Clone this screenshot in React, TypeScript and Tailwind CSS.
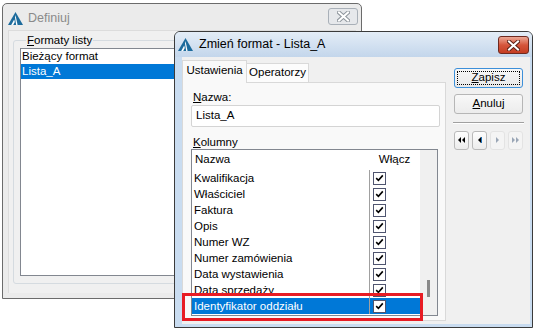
import React from "react";

const rows = [
  "Kwalifikacja",
  "Właściciel",
  "Faktura",
  "Opis",
  "Numer WZ",
  "Numer zamówienia",
  "Data wystawienia",
  "Data sprzedaży",
  "Identyfikator oddziału",
];

const Logo = () => (
  <svg width="15" height="13" viewBox="0 0 15 13">
    <polygon points="7.5,0 15,13 0,13" fill="#1d6b9c" />
    <polygon points="7.5,3 9.6,13 8.2,13 7,5.5" fill="#ffffff" />
    <polygon points="3.2,13 6.2,7.5 6.8,10 5.2,13" fill="#ffffff" />
  </svg>
);

const CloseGlyph = ({ color, outline }: { color: string; outline: string }) => (
  <svg width="13" height="11" viewBox="0 0 13 11">
    <path d="M2 1.5 L11 9.5 M11 1.5 L2 9.5" stroke={outline} strokeWidth="4" strokeLinecap="square" />
    <path d="M2 1.5 L11 9.5 M11 1.5 L2 9.5" stroke={color} strokeWidth="2" strokeLinecap="square" />
  </svg>
);

const Check = () => (
  <span className="flex h-[13px] w-[13px] items-center justify-center border border-[#4f5570] bg-white">
    <svg width="9" height="8" viewBox="0 0 9 8">
      <path d="M1.2 4.2 L3.4 6.3 L7.8 1.4" stroke="#000" strokeWidth="1.6" fill="none" />
    </svg>
  </span>
);

const NavIcon = ({ dir, double, off }: { dir: "l" | "r"; double?: boolean; off?: boolean }) => {
  const fill = off ? "#9aa6b6" : "#000";
  const one = (x: number) =>
    dir === "l" ? `${x + 3},0 ${x + 3},6 ${x},3` : `${x},0 ${x},6 ${x + 3},3`;
  return (
    <svg width={double ? 8 : 5} height="7" viewBox={double ? "0 0 8 7" : "0 0 5 7"}>
      {double ? (
        <>
          <polygon points={one(0)} fill={fill} />
          <polygon points={one(4)} fill={fill} />
        </>
      ) : (
        <>
          <polygon points={one(1)} fill={fill} />
          {!off && <rect x={dir === "l" ? 4 : 0} y="0" width="1" height="6" fill="#1c6fb8" />}
        </>
      )}
    </svg>
  );
};

const NavButton = ({ children, off }: { children: React.ReactNode; off?: boolean }) => (
  <div
    className={`flex h-[19px] w-[15px] items-center justify-center rounded-[3px] border ${
      off ? "border-[#e3e3e3] bg-[#f4f4f4]" : "border-[#b9b9b9] bg-gradient-to-b from-[#fdfdfd] to-[#ececec]"
    }`}
  >
    {children}
  </div>
);

export default function App() {
  return (
    <div className="relative h-[329px] w-[534px] overflow-hidden bg-white font-['Segoe_UI','Liberation_Sans',sans-serif] text-[11.5px] text-black">
      {/* Definiuj – inactive window */}
      <div className="absolute left-[2px] top-[3px] flex h-[296px] w-[360px] flex-col rounded-t-[5px] border border-[#6b6b6b] bg-[#ebebeb]">
        <div className="relative flex h-[26px] items-center gap-[5px] pl-[5px] pt-[2px]">
          <Logo />
          <span className="text-[12.5px] text-[#8a8a8a]">Definiuj</span>
          <div className="absolute right-[3px] top-[4px] flex h-[17px] w-[30px] items-center justify-center rounded-[3px] border border-[#a9b0b8] bg-[#e6e8eb]">
            <CloseGlyph color="#ffffff" outline="#8e959c" />
          </div>
        </div>
        <div className="mx-[5px] mb-[5px] flex-1 border-t border-l border-[#dcdcdc] bg-[#f0f0f0] pl-[4px] pt-[2px]">
          <fieldset className="h-[251px] w-[344px] rounded-[3px] border border-[#d5dbe0] pl-[6px] pr-[6px]">
            <legend className="ml-[6px] px-[1px] leading-[14px]">
              <span className="underline">F</span>ormaty listy
            </legend>
            <div className="mt-[1px] h-[228px] border border-[#828790] bg-white">
              <div className="h-[15px] pl-[1px] leading-[15px]">Bieżący format</div>
              <div className="h-[15px] bg-[#0078d7] pl-[1px] leading-[15px] text-white">Lista_A</div>
            </div>
          </fieldset>
        </div>
      </div>

      {/* Zmień format – active window */}
      <div className="absolute left-[174px] top-[31px] flex h-[297px] w-[359px] flex-col rounded-t-[6px] border border-[#3b3b3b] bg-[#c9dcf0]">
        <div className="relative flex h-[25px] items-center gap-[6px] rounded-t-[5px] bg-gradient-to-b from-[#e4edf7] to-[#c3d6eb] pl-[3px]">
          <Logo />
          <span className="text-[12.5px]">Zmień format - Lista_A</span>
          <div className="absolute right-[3px] top-[4px] flex h-[18px] w-[31px] items-center justify-center rounded-[3px] border border-[#6e2a20] bg-gradient-to-b from-[#eba795] via-[#d5553b] to-[#c43d22]">
            <CloseGlyph color="#ffffff" outline="#5a2016" />
          </div>
        </div>
        <div className="mb-[3px] ml-[7px] mr-[2px] flex flex-1 bg-[#f0f0f0]">
          <div className="flex w-[264px] flex-col pt-[3px]">
            <div className="flex h-[22px] items-end">
              <div className="relative z-10 -mb-px flex h-[23px] w-[65px] items-center justify-center border border-b-0 border-[#d9d9d9] bg-[#f9f9f9] pb-[2px]">
                Ustawienia
              </div>
              <div className="flex h-[19px] w-[62px] items-center justify-center border border-b-0 border-l-0 border-[#d9d9d9] bg-[#fcfcfc]">
                Operatorzy
              </div>
            </div>
            <div className="flex h-[239px] flex-col border border-[#d9d9d9] bg-[#f9f9f9] pl-[8px] pr-[7px] pt-[7px]">
              <div className="h-[14px] pl-[2px] leading-[14px]">
                <span className="underline">N</span>azwa:
              </div>
              <div className="mt-[1px] flex h-[22px] w-[249px] items-center rounded-[2px] border border-[#d4d4d4] bg-white pl-[4px]">
                Lista_A
              </div>
              <div className="mt-[9px] h-[13px] pl-[2px] leading-[13px]">
                <span className="underline">K</span>olumny
              </div>
              <div className="flex h-[167px] w-[247px] border border-[#828790] bg-white">
                <div className="flex flex-1 flex-col">
                  <div className="flex h-[20px] items-center">
                    <div className="w-[177px] pl-[3px]">Nazwa</div>
                    <div className="flex-1 text-center">Włącz</div>
                  </div>
                  {rows.map((r, i) => {
                    const sel = i === rows.length - 1;
                    return (
                      <div key={r} className={`flex h-[16px] items-center ${sel ? "bg-[#0078d7] text-white" : ""}`}>
                        <div className="w-[177px] pl-[2px] leading-[16px]">{r}</div>
                        <div className="flex h-[16px] flex-1 items-center border-l border-[#a0a0a0] pl-[3px]">
                          <Check />
                        </div>
                      </div>
                    );
                  })}
                </div>
                <div className="w-[17px] bg-[#f0f0f0] pl-[7px] pt-[130px]">
                  <div className="h-[17px] w-[3px] bg-[#8a8a8a]" />
                </div>
              </div>
            </div>
          </div>

          <div className="ml-[8px] flex w-[69px] flex-col pt-[11px]">
            <div className="flex h-[20px] items-center justify-center rounded-[3px] border border-[#3c8fd9] bg-gradient-to-b from-[#f7f7f7] to-[#e9e9e9] p-[2px]">
              <div className="flex h-full w-full items-center justify-center border border-dotted border-black">
                <span>
                  <span className="underline">Z</span>apisz
                </span>
              </div>
            </div>
            <div className="mt-[6px] flex h-[20px] items-center justify-center rounded-[3px] border border-[#b6b6b6] bg-gradient-to-b from-[#f8f8f8] to-[#ececec]">
              <span>
                <span className="underline">A</span>nuluj
              </span>
            </div>
            <div className="-ml-px mt-[8px] h-[2px] w-[71px] border-t border-[#a0a0a0] bg-white" />
            <div className="mt-[7px] flex gap-[3px]">
              <NavButton>
                <NavIcon dir="l" double />
              </NavButton>
              <NavButton>
                <NavIcon dir="l" />
              </NavButton>
              <NavButton off>
                <NavIcon dir="r" off />
              </NavButton>
              <NavButton off>
                <NavIcon dir="r" double off />
              </NavButton>
            </div>
          </div>
        </div>
      </div>

      {/* highlight */}
      <div className="absolute left-[182px] top-[293px] h-[28px] w-[241px] border-[3px] border-[#e81c24]" />
    </div>
  );
}
